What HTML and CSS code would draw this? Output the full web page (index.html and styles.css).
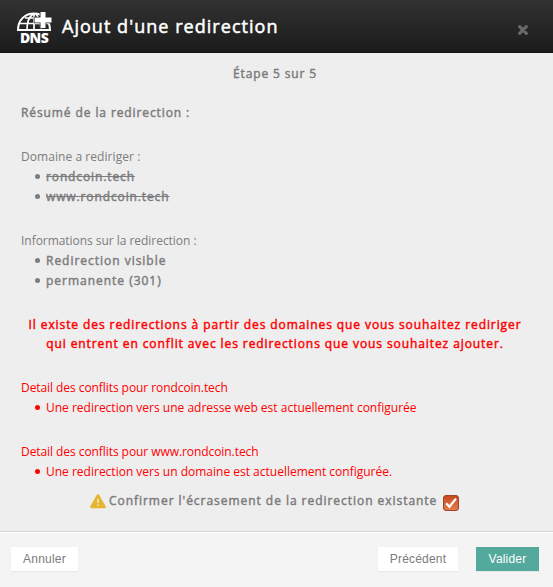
FILE: index.html
```html
<!DOCTYPE html>
<html lang="fr">
<head>
<meta charset="utf-8">
<title>Ajout d'une redirection</title>
<link rel="stylesheet" href="styles.css">
</head>
<body>
<div class="modal">
  <header class="header">
    <div class="logo">
      <svg class="globe" viewBox="0 0 36 21" width="36" height="21">
        <path d="M2 19C2 8 10 2.500 18 2.500S34 8 34 19z" fill="none" stroke="#fff" stroke-width="2"/>
        <path d="M4 12.500h28M9 7h18M11 18.500C11 11 13 6 17 3M18 3v16M25 18.500C25 12 23 7 20 3" fill="none" stroke="#fff" stroke-width="1.700"/>
        <path d="M24.500 1h5v5.500h6v5h-6V17h-5v-5.500h-6v-5h6z" fill="#fff" stroke="#282828" stroke-width="1.600" paint-order="stroke"/>
      </svg>
      <span class="logo-text">DNS</span>
    </div>
    <h1 class="title">Ajout d'une redirection</h1>
    <svg class="close" viewBox="0 0 10 10" width="10" height="10"><path d="M1.700 1.700l6.600 6.600M8.300 1.700L1.700 8.300" stroke="#696969" stroke-width="3.200" stroke-linecap="round"/></svg>
  </header>
  <main class="content">
    <p class="step strong">Étape 5 sur 5</p>
    <h2 class="summary strong">Résumé de la redirection :</h2>
    <section class="group">
      <p class="label">Domaine a rediriger :</p>
      <ul class="list strong struck"><li><s>rondcoin.tech</s></li><li><s>www.rondcoin.tech</s></li></ul>
    </section>
    <section class="group">
      <p class="info">Informations sur la redirection :</p>
      <ul class="list strong"><li>Redirection visible</li><li>permanente (301)</li></ul>
    </section>
    <p class="warning strong">Il existe des redirections à partir des domaines que vous souhaitez rediriger<br>qui entrent en conflit avec les redirections que vous souhaitez ajouter.</p>
    <section class="group conflict">
      <p>Detail des conflits pour rondcoin.tech</p>
      <ul class="list"><li>Une redirection vers une adresse web est actuellement configurée</li></ul>
    </section>
    <section class="group conflict">
      <p>Detail des conflits pour www.rondcoin.tech</p>
      <ul class="list"><li>Une redirection vers un domaine est actuellement configurée.</li></ul>
    </section>
    <div class="confirm strong">
      <svg class="alert" viewBox="0 0 16 15" width="16" height="15"><path d="M8 1.500L14.500 13h-13z" fill="#e5b532" stroke="#e5b532" stroke-width="2.600" stroke-linejoin="round"/><path d="M8 5v4M8 10.500v1.500" stroke="#f3e5bb" stroke-width="1.700"/></svg>
      <span class="confirm-text">Confirmer l'écrasement de la redirection existante</span>
      <svg class="check" viewBox="0 0 16 16" width="16" height="16">
        <defs><linearGradient id="orange" x1="0" y1="0" x2="0" y2="1"><stop offset="0" stop-color="#c7481c"/><stop offset="1" stop-color="#e57e50"/></linearGradient></defs>
        <rect x=".5" y=".5" width="15" height="15" rx="2.500" fill="url(#orange)" stroke="#9f4528"/>
        <path d="M3.200 8.200l3.200 3.500L13 3.600" fill="none" stroke="#fff" stroke-width="2.200"/>
      </svg>
    </div>
  </main>
  <footer class="footer">
    <button class="button cancel">Annuler</button>
    <button class="button previous">Précédent</button>
    <button class="button submit">Valider</button>
  </footer>
</div>
</body>
</html>
```
FILE: styles.css
```css
* { box-sizing: border-box; }
body { margin: 0; font: 12px/20px "Open Sans", sans-serif; color: #7c7c7c; background: #eee; }
p, h1, h2, ul { margin: 0; padding: 0; }
.modal { height: 587px; display: flex; flex-direction: column; }
.header { height: 53px; display: flex; align-items: flex-start; background: linear-gradient(#323232, #1b1b1b); border-bottom: 1px solid #151112; padding: 11px 25px 0 16px; }
.logo { display: flex; flex-direction: column; align-items: center; width: 36px; }
.globe { flex: none; }
.logo-text { font: 800 14px/14px "Open Sans", sans-serif; color: #fff; margin-top: -1px; letter-spacing: -.6px; }
.title { flex: 1; margin: 1px 0 0 10px; color: #fff; font-size: 18px; line-height: 28px; font-weight: 400; letter-spacing: 1.04px; -webkit-text-stroke: .5px currentColor; }
.close { margin-top: 14px; }
.content { flex: 1; padding: 11px 21px 0; }
.label { letter-spacing: .06px; }
.info { letter-spacing: -.04px; }
.strong { font-weight: 400; font-size: 12px; letter-spacing: .98px; -webkit-text-stroke: .45px currentColor; }
.step { text-align: center; letter-spacing: .85px; padding-right: 3px; }
.summary { margin-top: 19px; letter-spacing: .9px; }
.group { margin-top: 24px; }
.list { list-style: none; padding-left: 25px; }
.list li { position: relative; }
.list li::before { content: ""; position: absolute; left: -11.5px; top: 6.5px; width: 5.5px; height: 5.5px; border-radius: 50%; background: currentColor; }
.struck { letter-spacing: .88px; }
.warning { margin: 24px -10px 0; color: #f00; text-align: center; line-height: 19px; white-space: nowrap; letter-spacing: .91px; padding-right: 3px; }
.conflict { color: #f00; }
.warning + .group { margin-top: 25px; }
.conflict p { letter-spacing: -.07px; }
.confirm { display: flex; align-items: center; margin: 9px 0 0 69px; white-space: nowrap; letter-spacing: .96px; }
.confirm-text { margin: 0 6px 0 3px; }
.check { margin-top: 3px; }
.footer { height: 56px; display: flex; align-items: flex-start; background: #f4f4f4; border-top: 1px solid #d5d5d5; box-shadow: inset 0 1px #fff; padding: 15px 14px 0 11px; }
.button { height: 24px; border: 0; padding: 0; background: #fff; color: #7c7c7c; font: 12px/24px "Liberation Sans", sans-serif; letter-spacing: .2px; box-shadow: 0 1px 1px #e8e8e8; }
.cancel { width: 67px; margin-right: auto; }
.previous { width: 80px; margin-right: 18px; }
.submit { width: 63px; color: #fff; background: #53a99c; }
```
